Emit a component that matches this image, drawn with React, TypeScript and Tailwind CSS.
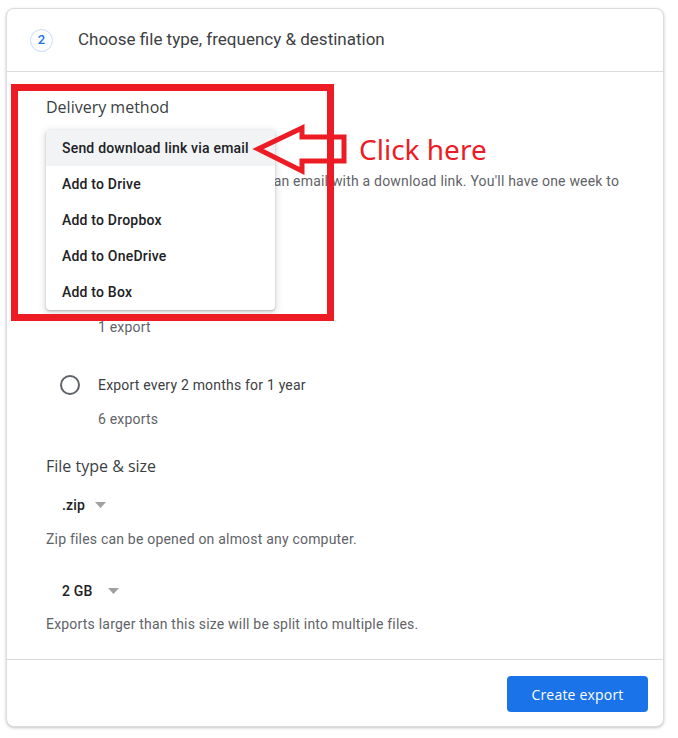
import React from "react";

const Caret = () => (
  <svg width="11" height="6" viewBox="0 0 11 6" className="shrink-0">
    <polygon points="0,0 11,0 5.5,6" fill="#a0a0a0" />
  </svg>
);

const headFont = { fontFamily: "'Open Sans', Roboto, sans-serif" };

export default function App() {
  const menu = [
    "Send download link via email",
    "Add to Drive",
    "Add to Dropbox",
    "Add to OneDrive",
    "Add to Box",
  ];
  return (
    <div
      className="relative w-[678px] h-[738px] bg-white overflow-hidden"
      style={{ fontFamily: "Roboto, 'Liberation Sans', sans-serif" }}
    >
      <div className="pt-[8px] pl-[6px]">
        <div className="relative w-[658px] h-[719px] rounded-[8px] border border-[#dadce0] shadow-[0_1px_3px_rgba(60,64,67,0.3)] bg-white flex flex-col">
          {/* header */}
          <div className="h-[63px] shrink-0 flex items-center border-b border-[#dadce0] pl-[23px]">
            <div className="w-[23px] h-[23px] rounded-full border border-[#c6dafc] flex items-center justify-center text-[13px] font-medium text-[#1a73e8]">
              2
            </div>
            <div className="ml-[25px] text-[17px] text-[#3c4043]">
              Choose file type, frequency &amp; destination
            </div>
          </div>

          {/* content */}
          <div className="flex-1 flex flex-col pl-[39px] text-[14px] text-[#5f6368] tracking-[0.2px]">
            <div
              className="mt-[25px] h-5 flex items-center text-[16px] font-medium text-[#3c4043] tracking-normal"
              style={headFont}
            >
              Delivery method
            </div>
            {/* select, covered by the open menu */}
            <div className="invisible mt-[13px] h-9 flex items-center pl-4 text-[#202124] font-medium gap-[10px]">
              Send download link via email
              <Caret />
            </div>
            <div className="mt-[5px] w-[590px] leading-5">
              When your files are ready, you'll get an email with a download link. You'll have one week to download your files.
            </div>
            <div
              className="invisible mt-[31px] h-5 flex items-center text-[16px] font-medium text-[#3c4043] tracking-normal"
              style={headFont}
            >
              Frequency
            </div>
            <div className="invisible mt-[13px] h-9 flex items-center pl-[14px] text-[#3c4043]">
              <div className="w-5 h-5 rounded-full border-2 border-[#1a73e8] flex items-center justify-center">
                <div className="w-[10px] h-[10px] rounded-full bg-[#1a73e8]" />
              </div>
              <span className="ml-[18px]">Export once</span>
            </div>
            <div className="mt-[6px] h-5 flex items-center pl-[52px]">1 export</div>
            <div className="mt-[30px] h-9 flex items-center pl-[14px] text-[#3c4043]">
              <div className="w-5 h-5 rounded-full border-2 border-[#5f6368]" />
              <span className="ml-[18px]">Export every 2 months for 1 year</span>
            </div>
            <div className="mt-[6px] h-5 flex items-center pl-[52px]">6 exports</div>
            <div
              className="mt-[27px] h-5 flex items-center text-[16px] font-medium text-[#3c4043] tracking-normal"
              style={headFont}
            >
              File type &amp; size
            </div>
            <div className="mt-[11px] h-9 flex items-center pl-4 text-[#202124] font-medium">
              <span>.zip</span>
              <span className="ml-[10px]">
                <Caret />
              </span>
            </div>
            <div className="mt-[6px] h-5 flex items-center">
              Zip files can be opened on almost any computer.
            </div>
            <div className="mt-[24px] h-9 flex items-center pl-4 text-[#202124] font-medium">
              <span>2 GB</span>
              <span className="ml-[15px]">
                <Caret />
              </span>
            </div>
            <div className="mt-[5px] h-5 flex items-center">
              Exports larger than this size will be split into multiple files.
            </div>
          </div>

          {/* footer */}
          <div className="h-[67px] shrink-0 border-t border-[#dadce0] flex justify-end items-start pt-[16px] pr-[15px]">
            <button
              className="w-[141px] h-9 rounded-[4px] bg-[#1a73e8] text-white text-[14px] font-medium tracking-[0.2px]"
              style={headFont}
            >
              Create export
            </button>
          </div>

          {/* dropdown menu */}
          <div className="absolute left-[39px] top-[121px] w-[229px] bg-white rounded-[4px] shadow-[0_2px_6px_2px_rgba(60,64,67,0.15),0_1px_2px_rgba(60,64,67,0.3)] overflow-hidden tracking-[0.2px]">
            {menu.map((m, i) => (
              <div
                key={m}
                className={
                  i === 0
                    ? "h-9 flex items-center pl-4 text-[14px] font-medium text-[#202124] bg-[#f1f3f4]"
                    : "h-9 flex items-center pl-4 text-[14px] font-medium text-[#202124]"
                }
              >
                {m}
              </div>
            ))}
          </div>
        </div>
      </div>

      {/* red annotation rectangle */}
      <div className="absolute left-[11px] top-[84px] w-[323px] h-[237px] border-[7px] border-[#ed1c24] pointer-events-none" />

      {/* red arrow */}
      <svg
        className="absolute left-[250px] top-[120px] pointer-events-none"
        width="100"
        height="58"
        viewBox="250 120 100 58"
      >
        <polygon
          points="258,149 302,128 302,137 344,137 344,161 302,161 302,171"
          fill="none"
          stroke="#ed1c24"
          strokeWidth="5"
          strokeLinejoin="miter"
        />
      </svg>

      {/* click here */}
      <div
        className="absolute left-[359px] top-[131px] text-[28px] leading-[36px] text-[#ed1c24]"
        style={{ fontFamily: "'Noto Sans', 'Open Sans', sans-serif" }}
      >
        Click here
      </div>
    </div>
  );
}
